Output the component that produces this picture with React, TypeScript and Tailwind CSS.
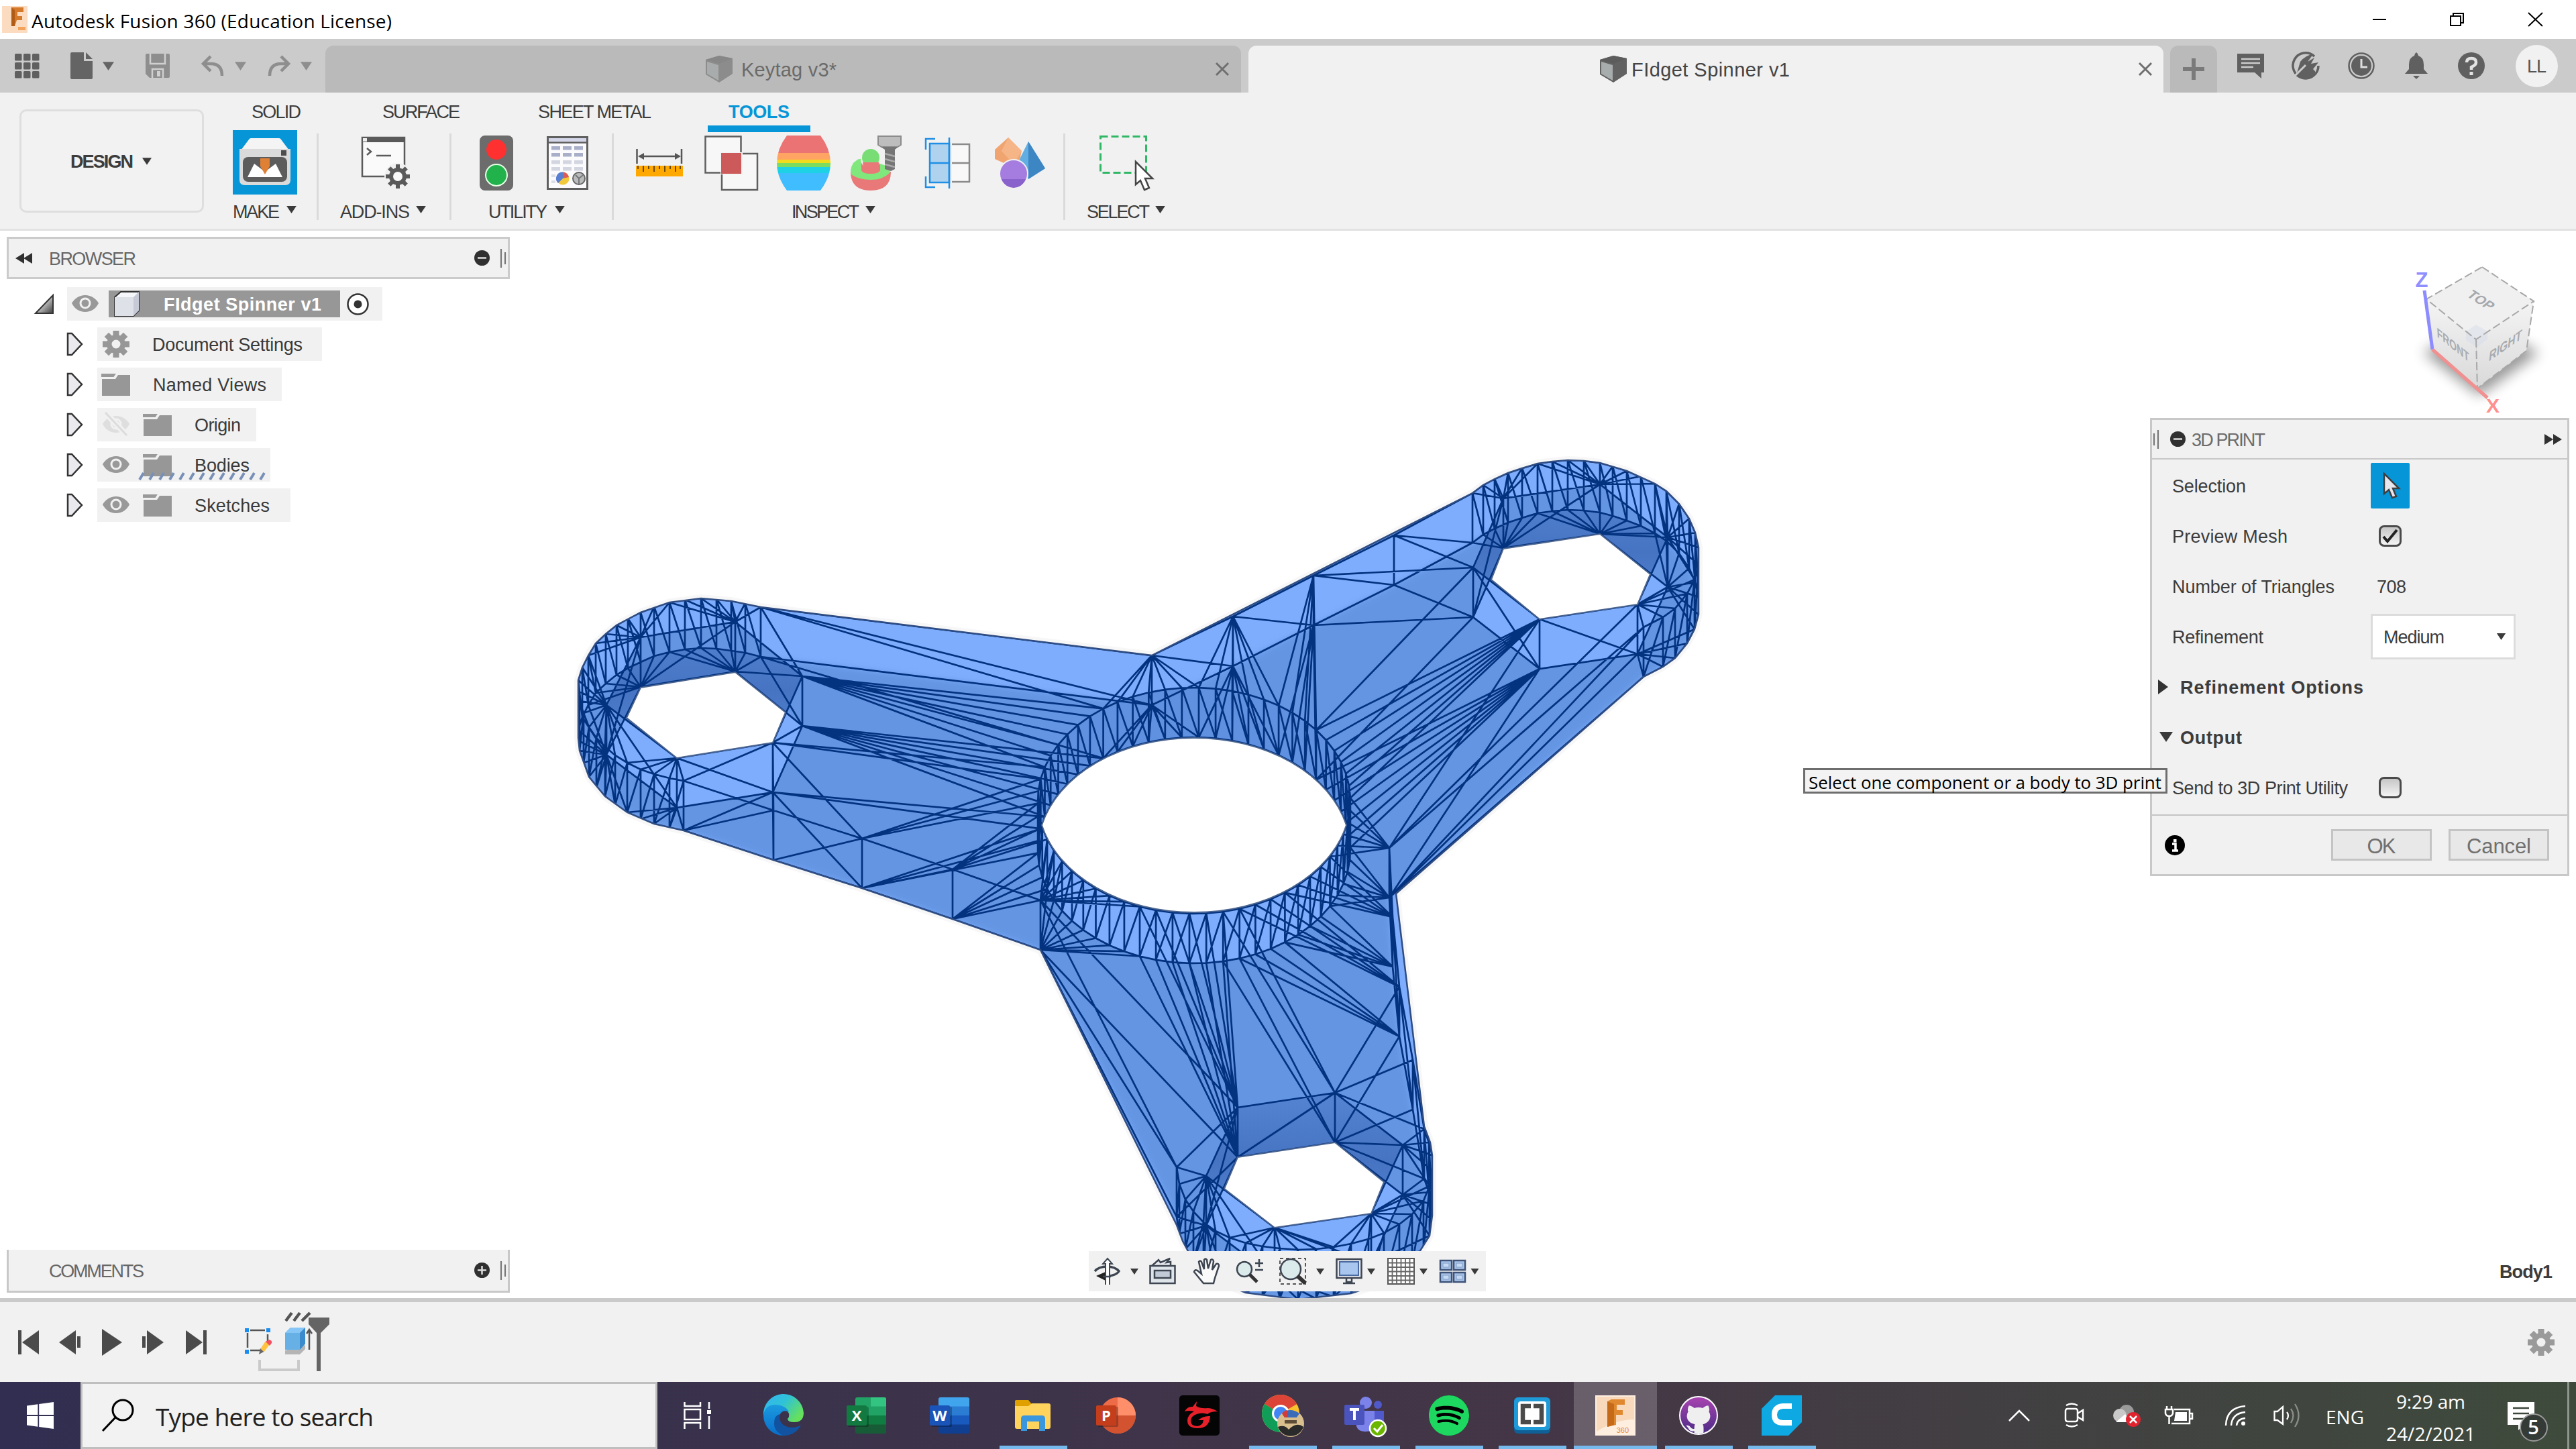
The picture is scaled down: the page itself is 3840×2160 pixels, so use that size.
import { useLayoutEffect, useRef, useState } from "react";
import type { ReactNode } from "react";
import { FaWindows, FaSpotify } from "react-icons/fa";

/* Text run stretched or tightened to an exact width through letter spacing. */
function Fit({ w, className = "", children }: { w: number; className?: string; children: string }) {
  const ref = useRef<HTMLSpanElement>(null);
  const [ls, setLs] = useState(0);
  useLayoutEffect(() => {
    const el = ref.current;
    if (!el) return;
    const n = el.getBoundingClientRect().width;
    setLs((w - n) / Math.max(1, children.length - 1));
  }, [w, children]);
  return (
    <span className={`block shrink-0 overflow-visible pt-[3px] whitespace-nowrap leading-none ${className}`} style={{ width: w }}>
      <span ref={ref} style={{ letterSpacing: ls }}>{children}</span>
    </span>
  );
}

function Svg({ w, h, className = "", children, vb }: { w: number; h: number; className?: string; children: ReactNode; vb?: string }) {
  return (
    <svg width={w} height={h} viewBox={vb ?? `0 0 ${w} ${h}`} className={`block shrink-0 overflow-visible ${className}`} fill="none">
      {children}
    </svg>
  );
}

function Down({ className = "", w = 16, h = 12, fill = "#3a3a3a" }: { className?: string; w?: number; h?: number; fill?: string }) {
  return (
    <Svg w={w} h={h} vb="0 0 16 12" className={className}>
      <path d="M0 0H16L8 12Z" fill={fill} />
    </Svg>
  );
}

/* ---------- icons ---------- */
function Gear({ s, fill, hole, className = "" }: { s: number; fill: string; hole: string; className?: string }) {
  return (
    <Svg w={s} h={s} vb="-20 -20 40 40" className={className}>
      {[0, 45, 90, 135].map((a) => (
        <rect key={a} x="-4.5" y="-20" width="9" height="40" fill={fill} transform={`rotate(${a})`} />
      ))}
      <circle r="14" fill={fill} />
      <circle r="6.5" fill={hole} />
    </Svg>
  );
}

function Cube({ a, b, c }: { a: string; b: string; c: string }) {
  return (
    <Svg w={40} h={40}>
      <path d="M0 6L20 0L40 4V27L20 40L0 28Z" fill={b} />
      <path d="M2 9L19 14V37L2 27Z" fill={a} />
      <path d="M0 6L20 0L40 4L20 12Z" fill={c} />
    </Svg>
  );
}

const Folder = ({ className = "" }: { className?: string }) => (
  <Svg w={42} h={34} className={className}>
    <path d="M0 2H19L17 5H0Z" fill="#999" stroke="#999" strokeWidth="2" />
    <path d="M0 9H20L24 3H42V34H0Z" fill="#979797" />
  </Svg>
);

const Eye = ({ off = false, className = "" }: { off?: boolean; className?: string }) => (
  <Svg w={40} h={32} className={className}>
    <path d="M0 15C4 8 11 3 20 3S36 8 40 15C36 23 29 28 20 28S4 23 0 15Z" fill={off ? "#dedede" : "#999"} />
    <circle cx="20" cy="15" r="7" stroke="#f1f1f1" strokeWidth="3" />
    {off && <path d="M4 -2L36 32" stroke="#f1f1f1" strokeWidth="9" />}
    {off && <path d="M4 -2L36 32" stroke="#dcdcdc" strokeWidth="3" />}
  </Svg>
);

function Cursor({ className = "", fill = "#fff" }: { className?: string; fill?: string }) {
  return (
    <Svg w={26} h={40} vb="0 0 26 40" className={className}>
      <path d="M2 2V32L9 26L14 38L20 36L15 24H24Z" fill={fill} stroke="#3f3f3f" strokeWidth="2.5" />
    </Svg>
  );
}

/* ---------- title bar ---------- */
function TitleBar() {
  return (
    <div className="flex h-[58px] items-center bg-white">
      <div className="ml-[3px] flex h-[40px] w-[38px] items-start justify-center bg-[#fbdcc0]">
        <Svg w={26} h={38}>
          <path d="M8 2H26V9H17V15H24V21H16L13 30H8Z" fill="#d5792b" />
          <path d="M8 2L13 6V30H8Z" fill="#b05c16" />
          <rect x="18" y="31" width="11" height="5" fill="#f3a45c" />
        </Svg>
      </div>
      <Fit w={537} className="ml-[6px] font-['Open_Sans',sans-serif] text-[28px] text-black">Autodesk Fusion 360 (Education License)</Fit>
      <div className="ml-auto flex items-center">
        <Svg w={20} h={20} className="mr-[95px]"><path d="M0 10H20" stroke="#000" strokeWidth="2" /></Svg>
        <Svg w={21} h={20} className="mr-[96px]">
          <path d="M1 5H16V19H1ZM5 5V1H20V15H16" stroke="#000" strokeWidth="2" />
        </Svg>
        <Svg w={21} h={20} className="mr-[50px]"><path d="M0 0L21 20M21 0L0 20" stroke="#000" strokeWidth="2" /></Svg>
      </div>
    </div>
  );
}

const CloseX = ({ className = "" }: { className?: string }) => (
  <Svg w={20} h={20} className={className}><path d="M1 1L19 19M19 1L1 19" stroke="#6f6f6f" strokeWidth="3" /></Svg>
);

function TabBar() {
  return (
    <div className="flex h-[80px] items-end bg-[#cbcbcb]">
      <div className="flex h-full w-[485px] items-center">
        <Svg w={36} h={36} className="ml-[22px]">
          {[0, 13, 26].map((y) => [0, 13, 26].map((x) => <rect key={`${x}-${y}`} x={x} y={y} width="10.5" height="10.5" rx="1.5" fill="#606060" />))}
        </Svg>
        <Svg w={33} h={40} className="ml-[47px]">
          <path d="M0 2Q0 0 2 0H20V13H33V38Q33 40 31 40H2Q0 40 0 38Z" fill="#646464" />
          <path d="M23 0L33 10H23Z" fill="#646464" />
        </Svg>
        <Down w={17} h={13} className="ml-[15px]" fill="#646464" />
        <Svg w={36} h={36} className="ml-[47px]">
          <path d="M0 2Q0 0 2 0H34Q36 0 36 2V34Q36 36 34 36H6L0 30Z" fill="#8e8e8e" />
          <path d="M7 0V15H29V0M10 36V23H26V36" stroke="#d0d0d0" strokeWidth="2.5" />
          <rect x="17" y="26" width="5" height="8" fill="#d0d0d0" />
        </Svg>
        <Svg w={33} h={30} className="ml-[47px]">
          <path d="M14 1L3 12L14 23M3 12H14Q31 12 31 30" stroke="#8e8e8e" strokeWidth="4.5" />
        </Svg>
        <Down w={17} h={13} className="ml-[17px]" fill="#8e8e8e" />
        <Svg w={33} h={30} className="ml-[33px]">
          <path d="M19 1L30 12L19 23M30 12H19Q2 12 2 30" stroke="#8e8e8e" strokeWidth="4.5" />
        </Svg>
        <Down w={17} h={13} className="ml-[15px]" fill="#8e8e8e" />
      </div>
      <div className="flex h-[70px] w-[1365px] items-center rounded-t-[12px] bg-[#bababa]">
        <div className="ml-[567px]"><Cube a="#a9acac" b="#8c8c8c" c="#878787" /></div>
        <Fit w={142} className="ml-[13px] font-['Liberation_Sans',sans-serif] text-[29px] text-[#6a6a6a]">Keytag v3*</Fit>
        <CloseX className="mr-[18px] ml-auto" />
      </div>
      <div className="ml-[11px] flex h-[70px] w-[1364px] items-center rounded-t-[12px] bg-[#f1f1f1]">
        <div className="ml-[524px]"><Cube a="#a7acac" b="#626262" c="#5c5c5c" /></div>
        <Fit w={236} className="ml-[7px] font-['Liberation_Sans',sans-serif] text-[29px] text-[#444]">FIdget Spinner v1</Fit>
        <CloseX className="mr-[17px] ml-auto" />
      </div>
      <div className="ml-[10px] flex h-[70px] w-[70px] items-center justify-center rounded-t-[12px] bg-[#bababa]">
        <Svg w={32} h={32}><path d="M16 0V32M0 16H32" stroke="#7a7a7a" strokeWidth="6" /></Svg>
      </div>
      <div className="flex h-full items-center">
        <Svg w={40} h={40} className="ml-[30px]">
          <path d="M0 2H40V30H36V39L26 30H0Z" fill="#606060" />
          <path d="M6 10H34M6 16H34M6 22H24" stroke="#ccc" strokeWidth="2.5" />
        </Svg>
        <Svg w={40} h={40} className="ml-[42px]">
          <path d="M33 6A19 19 0 1 0 39 20" stroke="#606060" strokeWidth="3.5" />
          <path d="M6 34L12 14Q20 4 31 3L23 14L33 8L28 17L39 15L31 25Q38 30 30 36Q20 42 6 34Z" fill="#606060" />
          <path d="M4 35L20 19" stroke="#ccc" strokeWidth="3" />
        </Svg>
        <Svg w={40} h={40} className="ml-[43px]">
          <circle cx="20" cy="20" r="18.5" stroke="#606060" strokeWidth="2.5" />
          <circle cx="20" cy="20" r="15" fill="#606060" />
          <path d="M20 10V22H29" stroke="#ddd" strokeWidth="3" />
        </Svg>
        <Svg w={36} h={40} className="ml-[44px]">
          <path d="M18 0Q21 2 21 5Q29 8 29 18V25L35 32H1L7 25V18Q7 8 15 5Q15 2 18 0Z" fill="#606060" />
          <path d="M13 35H23L18 40Z" fill="#606060" />
        </Svg>
        <Svg w={40} h={40} className="ml-[44px]">
          <circle cx="20" cy="20" r="20" fill="#606060" />
          <path d="M13 15Q13 9 20 9T27 15Q27 19 20 22V26" stroke="#e2e2e2" strokeWidth="4.5" />
          <rect x="17.5" y="29" width="5" height="5" fill="#e2e2e2" />
        </Svg>
        <div className="ml-[46px] flex h-[63px] w-[63px] items-center justify-center rounded-full bg-[#f1f1f1]">
          <Fit w={29} className="font-['Liberation_Sans',sans-serif] text-[27px] text-[#555]">LL</Fit>
        </div>
      </div>
    </div>
  );
}

/* ---------- ribbon ---------- */
const label = "font-['Liberation_Sans',sans-serif] text-[27px] text-[#3c3c3c]";
const Sep = () => <div className="mt-[2px] h-[129px] w-[3px] shrink-0 bg-[#dadada]" />;

function Group({ className, text, w, pad, gap, children }: { className: string; text: string; w: number; pad: string; gap: string; children: ReactNode }) {
  return (
    <div className={`flex shrink-0 flex-col ${className}`}>
      <div className="flex h-[92px] items-center">{children}</div>
      <div className={`flex h-[52px] items-center ${pad}`}>
        <Fit w={w} className={label}>{text}</Fit>
        <Down w={15} h={11} className={`-mt-[5px] ${gap}`} />
      </div>
    </div>
  );
}

function Ribbon() {
  return (
    <div className="flex h-[206px] border-b-[3px] border-[#e2e2e2] bg-[#f1f1f1]">
      <div className="mt-[25px] ml-[29px] flex h-[154px] w-[275px] shrink-0 items-center rounded-[10px] border-[3px] border-[#dedede] bg-[#f2f2f2]">
        <Fit w={94} className="ml-[73px] font-['Liberation_Sans',sans-serif] text-[27px] font-bold text-[#3c3c3c]">DESIGN</Fit>
        <Down w={14} h={11} className="ml-[13px]" />
      </div>
      <div className="flex flex-col">
        <div className="flex h-[63px] items-start">
          <Fit w={74} className={`mt-[13px] ml-[71px] ${label}`}>SOLID</Fit>
          <Fit w={116} className={`mt-[13px] ml-[121px] ${label}`}>SURFACE</Fit>
          <Fit w={169} className={`mt-[13px] ml-[116px] ${label}`}>SHEET METAL</Fit>
          <div className="ml-[84px] flex h-full w-[153px] flex-col items-center border-b-[10px] border-[#0696d7]">
            <Fit w={91} className="mt-[13px] font-['Liberation_Sans',sans-serif] text-[27px] font-bold text-[#0696d7]">TOOLS</Fit>
          </div>
        </div>
        <div className="flex">
          <Group className="w-[168px]" text="MAKE" w={70} pad="pl-[43px]" gap="ml-[10px]">
            <div className="-mt-[2px] ml-[43px] flex h-[96px] w-[96px] items-center justify-center bg-[#0696d7]">
              <Svg w={76} h={72}>
                <path d="M14 2Q15 0 17 0H59Q61 0 62 2L74 18H2Z" fill="#f4f4f4" />
                <path d="M0 16H76V62Q76 70 68 70H8Q0 70 0 62Z" fill="#dadada" />
                <rect x="62" y="18" width="8" height="8" fill="#4d4d4d" />
                <rect x="5" y="28" width="66" height="37" rx="8" fill="#5c5c5c" />
                <path d="M12 58L22 38L38 50L54 38L64 58Z" fill="#fff" />
                <path d="M31 30H45V42L38 54L31 42Z" fill="#e08035" />
              </Svg>
            </div>
          </Group>
          <Sep />
          <Group className="w-[195px]" text="ADD-INS" w={104} pad="pl-[32px]" gap="ml-[9px]">
            <Svg w={74} h={80} className="ml-[63px]">
              <path d="M2 2H65V60H2Z" fill="#fafafa" stroke="#5a5a5a" strokeWidth="2.5" />
              <path d="M2 2H65V9H2Z" fill="#5a5a5a" />
              <rect x="3" y="3" width="6" height="5" fill="#eee" />
              <path d="M9 18L15 23L9 28M23 29H45" stroke="#5a5a5a" strokeWidth="2.5" />
              <circle cx="55" cy="60" r="20" fill="#f1f1f1" />
              {[0, 45, 90, 135].map((a) => <rect key={a} x="52" y="42" width="6" height="36" fill="#5a5a5a" transform={`rotate(${a} 55 60)`} />)}
              <circle cx="55" cy="60" r="10" fill="#f8f8f8" stroke="#5a5a5a" strokeWidth="6" />
            </Svg>
          </Group>
          <Sep />
          <Group className="w-[239px]" text="UTILITY" w={88} pad="pl-[55px]" gap="ml-[11px]">
            <Svg w={50} h={82} className="ml-[42px]">
              <rect width="50" height="82" rx="8" fill="#6c6c6c" />
              <circle cx="25" cy="21" r="15" fill="#ff3030" />
              <circle cx="25" cy="59" r="16" fill="#22b24c" stroke="#e5ffe5" strokeWidth="2" />
            </Svg>
            <Svg w={62} h={80} className="ml-[50px]">
              <rect x="1.5" y="1.5" width="59" height="77" fill="#fbfbfd" stroke="#5f5f5f" strokeWidth="3" />
              <rect x="3" y="3" width="56" height="5" fill="#d3d6e8" />
              <path d="M0 9.5H62" stroke="#5f5f5f" strokeWidth="2.5" />
              {[15, 25, 36, 46].map((y, i) => [7, 24, 41].map((x) => <rect key={`${x}${y}`} x={x} y={y} width="13" height="5.5" fill={i < 2 ? "#a9afc8" : "#d3d6e0"} />))}
              <path d="M7 57H13V61H7ZM7 66H13V70H7Z" fill="#dcdee6" />
              <circle cx="24" cy="63" r="9.5" fill="#f2c83c" />
              <path d="M24 63V53.5A9.5 9.5 0 0 1 33 61Z" fill="#dd5a5a" />
              <path d="M24 53.5A9.5 9.5 0 0 0 17 70L24 63Z" fill="#5a7fd0" />
              <circle cx="48" cy="63" r="9" fill="#b9bbbd" stroke="#666" strokeWidth="2" />
              <path d="M43 58L48 63V71M48 63L54 58" stroke="#777" strokeWidth="2" />
            </Svg>
          </Group>
          <Sep />
          <Group className="w-[670px]" text="INSPECT" w={101} pad="pl-[265px]" gap="ml-[9px]">
            <Svg w={70} h={42} className="ml-[33px]">
              <path d="M1.5 0V22M68 0V22M8 11H62" stroke="#555" strokeWidth="2.5" />
              <path d="M3 11L12 6V16ZM67 11L58 6V16Z" fill="#555" />
              <rect y="25" width="70" height="16" fill="#ffa800" />
              <path d="M3 25V30M11 25V34M19 25V30M27 25V34M35 25V30M43 25V34M51 25V30M59 25V34M66 25V30" stroke="#6b4a00" strokeWidth="2" />
            </Svg>
            <Svg w={80} h={82} className="ml-[32px]">
              <rect x="1.5" y="1.5" width="53" height="54" fill="#f7f7f7" stroke="#5f5f5f" strokeWidth="2.5" />
              <rect x="26" y="27" width="53" height="54" fill="#f7f7f7" stroke="#5f5f5f" strokeWidth="2.5" />
              <rect x="24" y="25" width="33" height="33" fill="#f1f1f1" />
              <rect x="25" y="26" width="30" height="31" fill="#cc5a5a" />
            </Svg>
            <Svg w={80} h={82} className="ml-[28px]">
              <clipPath id="zebra"><path d="M15 0H65Q80 20 80 41T65 82H15Q0 62 0 41T15 0Z" /></clipPath>
              <g clipPath="url(#zebra)">
                <rect width="80" height="26" fill="#ec7373" />
                <rect y="26" width="80" height="10" fill="#ffa463" />
                <rect y="36" width="80" height="5" fill="#f0dc1c" />
                <rect y="41" width="80" height="6" fill="#7bdc5f" />
                <rect y="47" width="80" height="9" fill="#1cd2e4" />
                <rect y="56" width="80" height="26" fill="#40bdff" />
              </g>
            </Svg>
            <Svg w={76} h={82} className="ml-[30px]">
              <path d="M0 54Q0 82 30 82T60 54Z" fill="#e97878" />
              <path d="M0 52Q2 36 18 34L50 44Q60 48 58 56Q48 66 30 66T1 58Z" fill="#7fe77c" />
              <path d="M16 36V52Q18 57 30 57T44 52V36Z" fill="#e97878" />
              <circle cx="30" cy="35" r="15" fill="#f1f1f1" />
              <circle cx="30" cy="33" r="13" fill="#78dd75" />
              <path d="M18 40H42V52Q30 58 20 52Z" fill="#e97878" />
              <path d="M41 1H75V14L70 17H46L41 14Z" fill="#bdbdbd" stroke="#8c8c8c" strokeWidth="2" />
              <path d="M45 17H71L66 21V50L60 53L51 50V21Z" fill="#757575" />
              <path d="M51 27L66 31M51 35L66 39M51 43L66 47" stroke="#aaa" strokeWidth="2.5" />
            </Svg>
            <Svg w={68} h={76} className="ml-[34px]">
              <path d="M41 10H67V66H41M41 38H67" fill="#f8f8f8" stroke="#8a8a8a" strokeWidth="2.5" />
              <rect x="8" y="9" width="29" height="58" fill="#afd2ee" stroke="#1f8fe6" strokeWidth="2.5" />
              <path d="M8 38H37M37 0V76M16 2H2V18M2 58V74H16" stroke="#1f8fe6" strokeWidth="2.5" />
            </Svg>
            <Svg w={76} h={76} className="ml-[37px]">
              <path d="M50 6L75 46L50 62L36 34Z" fill="#62aee2" />
              <path d="M50 6L75 46L50 62Z" fill="#3c86c4" />
              <path d="M20 0L40 20L36 38L22 42L0 32V18Z" fill="#f0a570" />
              <path d="M20 0L40 20L28 40L10 20Z" fill="#f6b586" />
              <circle cx="28" cy="54" r="21" fill="#a57de0" stroke="#f1f1f1" strokeWidth="2" />
              <path d="M10 62A19 19 0 0 0 46 62Z" fill="#8a62cc" />
            </Svg>
          </Group>
          <Sep />
          <Group className="w-[182px]" text="SELECT" w={94} pad="pl-[32px]" gap="ml-[8px]">
            <Svg w={80} h={82} className="ml-[51px]">
              <rect x="1.5" y="1.5" width="68" height="54" stroke="#2fb765" strokeWidth="3" strokeDasharray="11 5" />
              <path d="M54 39V73L61 67L67 81L74 78L68 64H79Z" fill="#fff" stroke="#444" strokeWidth="2.5" />
            </Svg>
          </Group>
        </div>
      </div>
    </div>
  );
}

/* ---------- mesh ---------- */
type P = [number, number];
const DEPTH = 74;

const leftArc: P[] = [[1019, 1164], [998, 1160], [975, 1154], [955, 1147], [935, 1137], [917, 1126], [902, 1113], [889, 1100], [878, 1084], [870, 1063], [864, 1045], [862, 1030], [862, 1014], [868, 995], [877, 977], [888, 959], [903, 945], [919, 932], [936, 922], [955, 913], [975, 904], [998, 898], [1021, 894], [1045, 892], [1068, 893], [1090, 896], [1111, 899], [1134, 905]];
const rightArc: P[] = [[2195, 735], [2211, 723], [2228, 714], [2248, 705], [2269, 698], [2292, 691], [2314, 688], [2337, 686], [2361, 687], [2385, 690], [2404, 695], [2425, 702], [2446, 710], [2467, 721], [2484, 732], [2503, 751], [2518, 773], [2527, 794], [2532, 816], [2532, 842], [2526, 864], [2515, 885], [2497, 907], [2479, 920], [2450, 935]];
const lowArc: P[] = [[2123, 1683], [2130, 1703], [2135, 1722], [2135, 1745], [2131, 1768], [2122, 1790], [2105, 1810], [2086, 1825], [2063, 1838], [2040, 1847], [2014, 1854], [1988, 1859], [1962, 1862], [1935, 1863], [1908, 1861], [1882, 1858], [1857, 1853], [1833, 1845], [1812, 1835], [1794, 1822], [1779, 1806], [1767, 1788], [1758, 1765], [1754, 1740]];

const corner: P = [1717, 977];
const topEdge: P[] = [corner, [1838, 919], [1958, 858], [2078, 798]];
const rightCorner: P = [2071, 1264];
const sideEdge: P[] = [rightCorner, [2076, 1367], [2086, 1471], [2106, 1580]];
const leftCorner: P = [1551, 1342];
const underEdge: P[] = [leftCorner, [1420, 1296], [1285, 1250], [1153, 1208]];
const outline: P[] = [...topEdge, ...rightArc, ...sideEdge, ...lowArc, ...underEdge, ...leftArc];

const hexL: P[] = [[1096, 927], [955, 950], [904, 1051], [1009, 1130], [1152, 1107], [1196, 1008]];
const hexR: P[] = [[2385, 722], [2241, 743], [2196, 846], [2295, 923], [2441, 901], [2486, 801]];
const hexB: P[] = [[1990, 1629], [1845, 1651], [1798, 1753], [1900, 1830], [2044, 1809], [2091, 1707]];
const N = 58;
const ring: P[] = Array.from({ length: N }, (_, k) => {
  const a = -Math.PI / 2 + 0.03 + (k * 2 * Math.PI) / N;
  return [1780 + 233 * Math.cos(a), 1193.5 + 168.5 * Math.sin(a)];
});

const openings = [
  "M955 1025L1096 1002L1171 1062L1152 1107L1009 1130L934 1070Z",
  "M2241 818L2385 796L2460 856L2441 901L2295 923L2223 864Z",
  "M1845 1725L1990 1703L2063 1762L2044 1809L1900 1830L1825 1772Z",
  "M1553 1230A233 168 0 0 1 2007 1230A233 168 0 0 1 1553 1230Z",
];
const silhouette =
  "M1134 905L1717 977L2195 735L2211 723L2228 714L2248 705L2269 698L2292 691L2314 688L2337 686L2361 687L2385 690L2425 702L2467 721L2484 732L2503 751L2518 773L2527 794L2532 816V916L2526 938L2515 959L2497 981L2479 994L2450 1009L2081 1332L2123 1679L2132 1703L2135 1722V1812L2131 1842L2116 1866L2086 1899L2063 1912L2014 1928L1935 1937L1857 1927L1812 1909L1779 1880L1763 1850L1754 1826L1551 1416L1420 1370L1285 1324L1153 1282L1019 1238L975 1228L935 1211L902 1187L878 1158L864 1119L862 1100V1014L868 995L877 977L888 959L903 945L919 932L955 913L998 898L1045 892L1090 896Z";

const pts = (p: P[], dy = 0) => "M" + p.map(([x, y]) => `${x.toFixed(1)} ${(y + dy).toFixed(1)}`).join("L") + "Z";
const seg = (a: P, b: P, da = 0, db = 0) => `M${a[0].toFixed(1)} ${(a[1] + da).toFixed(1)}L${b[0].toFixed(1)} ${(b[1] + db).toFixed(1)}`;

const face: [P, P][] = [];
const fan = (c: P, from: number, to: number) => {
  for (let k = from; k <= to; k++) face.push([c, ring[k % N]]);
};
fan(corner, 52, 58);
fan(topEdge[1], 0, 5);
fan(topEdge[2], 5, 8);
fan(hexR[2], 8, 8);
fan(hexR[3], 8, 14);
fan(rightCorner, 14, 19);
fan(sideEdge[1], 19, 23);
fan(sideEdge[2], 23, 26);
fan(hexB[0], 26, 27);
fan(hexB[1], 27, 32);
fan(leftCorner, 32, 40);
fan(underEdge[1], 40, 43);
fan(underEdge[2], 43, 45);
fan(hexL[4], 45, 46);
fan(hexL[5], 46, 52);
fan(leftArc[leftArc.length - 1], 52, 52);
face.push(
  [leftArc[27], hexL[5]], [hexL[4], underEdge[3]], [hexL[4], leftArc[0]], [hexL[4], underEdge[2]],
  [hexR[2], topEdge[2]], [hexR[2], topEdge[3]], [rightCorner, hexR[3]], [rightCorner, hexR[4]], [rightCorner, rightArc[24]],
  [hexB[1], leftCorner], [hexB[1], lowArc[23]], [hexB[0], sideEdge[2]], [hexB[0], sideEdge[3]], [hexB[0], lowArc[0]],
);
const nearest = (arc: P[], hex: P[]) =>
  arc.forEach((a, i) => {
    const best = (q: P) => hex.reduce((m, h) => (Math.hypot(h[0] - q[0], h[1] - q[1]) < Math.hypot(m[0] - q[0], m[1] - q[1]) ? h : m));
    const m = best(a);
    face.push([m, a]);
    if (i > 0 && best(arc[i - 1]) !== m) face.push([m, arc[i - 1]]);
  });
nearest(leftArc, hexL);
nearest(rightArc, hexR);
nearest(lowArc, hexB);

const wall = (p: P[]) => p.map((a, i) => seg(a, a, 0, DEPTH) + seg(a, p[(i + 1) % p.length], 0, DEPTH)).join("");
const wire =
  [0, DEPTH].map((d) => face.map(([a, b]) => seg(a, b, d, d)).join("") + [outline, hexL, hexR, hexB, ring].map((p) => pts(p, d)).join("")).join("") +
  [outline, hexL, hexR, hexB, ring].map(wall).join("");

function Mesh() {
  return (
    <svg className="absolute inset-0" width="3840" height="1591" viewBox="0 344 3840 1591" fill="none">
      <defs>
        <clipPath id="sil"><path d={silhouette} /></clipPath>
        <clipPath id="low"><path d={pts(outline, DEPTH)} /></clipPath>
        <filter id="soft" x="-5%" y="-5%" width="110%" height="110%"><feGaussianBlur stdDeviation="5" /></filter>
        <linearGradient id="dark" x1="0" y1="0" x2="0" y2="1">
          <stop offset="0" stopColor="#5484d2" /><stop offset="0.5" stopColor="#4674c2" /><stop offset="1" stopColor="#5484d2" />
        </linearGradient>
      </defs>
      <path d={silhouette} stroke="#000" strokeOpacity="0.03" strokeWidth="12" />
      <path d={silhouette} fill="#7eadfd" />
      <g clipPath="url(#sil)"><path d={pts(outline, DEPTH)} fill="#6495e3" filter="url(#soft)" /></g>
      {[hexL, hexR, hexB].map((h, i) => (
        <g key={i}>
          <path d={pts(h, DEPTH)} fill="#7eadfd" />
          <path d={pts(h)} fill="#6495e3" />
          <path d={pts(h)} fill="url(#dark)" clipPath="url(#low)" />
        </g>
      ))}
      <path d={pts(ring, DEPTH)} fill="#7eadfd" />
      <path d={pts(ring)} fill="#5f91e0" />
      <g clipPath="url(#sil)"><path d={wire} stroke="#03327f" strokeWidth="2.7" /></g>
      {openings.map((d) => <path key={d} d={d} fill="#fff" stroke="#4a6490" strokeWidth="2" />)}
      <path d={silhouette} stroke="#2f4d83" strokeWidth="2.5" />
    </svg>
  );
}

function ViewCube() {
  return (
    <svg className="absolute top-[36px] left-[3560px]" width="280" height="240" viewBox="3560 380 280 240" fill="none">
      <defs>
        <filter id="shade" x="-30%" y="-30%" width="160%" height="160%"><feGaussianBlur stdDeviation="10" /></filter>
        <linearGradient id="cubeSide" x1="0" y1="0" x2="0" y2="1"><stop offset="0" stopColor="#f4f4f4" /><stop offset="1" stopColor="#d9d9d9" /></linearGradient>
      </defs>
      <path d="M3612 525L3700 480L3785 526L3696 590Z" fill="#000" opacity="0.4" filter="url(#shade)" />
      <path d="M3617 446L3691 506L3693 579L3626 521Z" fill="url(#cubeSide)" />
      <path d="M3691 506L3777 449L3766 523L3693 579Z" fill="url(#cubeSide)" />
      <path d="M3700 398L3777 449L3691 506L3617 446Z" fill="#f0f0f0" />
      <path d="M3676 494L3691 484L3708 494V506L3692 518L3676 507Z" fill="#d5dbe8" opacity="0.5" />
      <path d="M3700 398L3777 449L3691 506L3617 446ZM3691 506L3693 579L3766 523L3777 449" stroke="#a8a8a8" strokeWidth="2" strokeDasharray="12 5" />
      <path d="M3614 433L3626 521" stroke="#8c8cff" strokeWidth="5" />
      <path d="M3626 521L3708 593" stroke="#f09090" strokeWidth="5" />
      <g fontFamily="'Liberation Sans', sans-serif" fontWeight="bold" textAnchor="middle">
        <text transform="matrix(0.76 0.5 -0.72 0.6 3693 452)" fontSize="22" fill="#a6a8ac">TOP</text>
        <text transform="matrix(0.7 0.56 0.05 1 3657 521)" fontSize="20" fill="#a8abb0">FRONT</text>
        <text transform="matrix(0.75 -0.52 -0.12 1 3734 522)" fontSize="21" fill="#a8abb0">RIGHT</text>
        <text x="3610" y="428" fontSize="31" fill="#8f8fff">Z</text>
        <text x="3716" y="615" fontSize="30" fill="#ff9090">X</text>
      </g>
    </svg>
  );
}

/* ---------- browser ---------- */
const row = "font-['Liberation_Sans',sans-serif] text-[27px] text-[#3a3a3a]";
const Expand = () => (
  <Svg w={25} h={36} className="ml-[99px]"><path d="M2 2H8L23 18L8 34H2Z" fill="#e9e9ee" stroke="#333" strokeWidth="2.5" /></Svg>
);

function TreeRow({ width, text, w, icon }: { width: string; text: string; w: number; icon: "gear" | "folder" | "eye" | "off" }) {
  return (
    <div className="mb-[10px] flex h-[50px] items-center">
      <Expand />
      <div className={`ml-[21px] flex h-full items-center bg-[#f1f1f1] ${width}`}>
        {icon === "gear" && <Gear s={40} fill="#979797" hole="#f1f1f1" className="ml-[8px]" />}
        {icon === "folder" && <Folder className="ml-[7px]" />}
        {(icon === "eye" || icon === "off") && <Eye off={icon === "off"} className="ml-[8px]" />}
        {(icon === "eye" || icon === "off") && <Folder className="ml-[21px]" />}
        <Fit w={w} className={`ml-[34px] ${row}`}>{text}</Fit>
      </div>
    </div>
  );
}

const Grip = ({ flip = false }: { flip?: boolean }) => (
  <Svg w={8} h={28} className={flip ? "-scale-x-100" : ""}><path d="M1 0V28M7 5V23" stroke="#777" strokeWidth="2.2" /></Svg>
);
const Disc = ({ plus = false, className = "" }: { plus?: boolean; className?: string }) => (
  <Svg w={23} h={23} className={className}>
    <circle cx="11.5" cy="11.5" r="11.5" fill="#303030" />
    <path d={plus ? "M5 11.5H18M11.5 5V18" : "M5 11.5H18"} stroke="#ddd" strokeWidth="2.5" />
  </Svg>
);

function Browser() {
  return (
    <div className="absolute top-[9px] left-0">
      <div className="ml-[10px] flex h-[63px] w-[750px] items-center border-[3px] border-[#cbcbcb] bg-[#f1f1f1]">
        <Svg w={25} h={16} className="ml-[10px]"><path d="M13 0V16L0 8ZM25 0V16L12 8Z" fill="#303030" /></Svg>
        <Fit w={130} className="ml-[25px] font-['Liberation_Sans',sans-serif] text-[27px] text-[#666]">BROWSER</Fit>
        <Disc className="ml-auto" />
        <div className="mr-[3px] ml-[16px]"><Grip /></div>
      </div>
      <div className="mt-[12px] mb-[10px] flex h-[50px] items-center">
        <Svg w={30} h={30} className="ml-[51px]">
          <defs><linearGradient id="tri" x1="0" y1="0" x2="1" y2="1"><stop offset="0.3" stopColor="#eee" /><stop offset="0.9" stopColor="#555" /></linearGradient></defs>
          <path d="M2 29L28 2V29Z" fill="url(#tri)" stroke="#333" strokeWidth="2" />
        </Svg>
        <div className="ml-[19px] flex h-full w-[470px] items-center bg-[#f1f1f1]">
          <Eye className="ml-[7px]" />
          <div className="ml-[15px] flex h-[40px] w-[345px] items-center bg-[#979797]">
            <Svg w={40} h={38} className="ml-[7px]">
              <path d="M2 9L11 1H38V29L30 37H2Z" fill="#f6f7fa" stroke="#333" strokeWidth="2" />
              <path d="M2 9H30V37H2Z" fill="#dfe1e8" />
              <path d="M30 9L38 1V29L30 37Z" fill="#c6c9d6" />
            </Svg>
            <Fit w={235} className="ml-[35px] font-['Liberation_Sans',sans-serif] text-[27px] font-bold text-white">FIdget Spinner v1</Fit>
          </div>
          <Svg w={33} h={33} className="ml-[10px]">
            <circle cx="16.5" cy="16.5" r="15" fill="#fff" stroke="#333" strokeWidth="2.5" />
            <circle cx="16.5" cy="16.5" r="6" fill="#333" />
          </Svg>
        </div>
      </div>
      <TreeRow width="w-[335px]" text="Document Settings" w={224} icon="gear" />
      <TreeRow width="w-[275px]" text="Named Views" w={169} icon="folder" />
      <TreeRow width="w-[237px]" text="Origin" w={69} icon="off" />
      <div className="relative">
        <TreeRow width="w-[258px]" text="Bodies" w={82} icon="eye" />
        <Svg w={192} h={12} className="absolute top-[36px] left-[206px]">
          {Array.from({ length: 13 }, (_, i) => <path key={i} d={`M${2 + i * 15} 11L${8 + i * 15} 1`} stroke="#7890b8" strokeWidth="4" />)}
        </Svg>
      </div>
      <TreeRow width="w-[288px]" text="Sketches" w={112} icon="eye" />
    </div>
  );
}

/* ---------- print dialog ---------- */
const field = "font-['Liberation_Sans',sans-serif] text-[27px] text-[#3c3c3c]";

function Check({ on = false }: { on?: boolean }) {
  return (
    <div className="flex h-[32px] w-[34px] items-center justify-center rounded-[8px] border-[3px] border-[#4a4a4a] bg-linear-to-b from-[#c6c6c6] to-[#f4f4f4]">
      {on && <Svg w={24} h={22}><path d="M2 12L8 19L22 2" stroke="#222" strokeWidth="4" /></Svg>}
    </div>
  );
}

function Row({ text, w, children }: { text: string; w: number; children?: ReactNode }) {
  return (
    <div className="flex h-[75px] items-center pl-[30px]">
      <div className="w-[296px] shrink-0"><Fit w={w} className={field}>{text}</Fit></div>
      {children}
    </div>
  );
}

function PrintDialog() {
  return (
    <div className="absolute top-[279px] left-[3205px] flex h-[683px] w-[625px] flex-col border-[3px] border-[#c8c8c8] bg-[#f1f1f1]">
      <div className="flex h-[59px] shrink-0 items-center border-b-[2px] border-[#c8c8c8]">
        <div className="ml-[2px]"><Grip flip /></div>
        <Disc className="ml-[17px]" />
        <Fit w={110} className="ml-[9px] font-['Liberation_Sans',sans-serif] text-[27px] text-[#6c6c6c]">3D PRINT</Fit>
        <Svg w={26} h={16} className="mr-[8px] ml-auto"><path d="M0 0L13 8L0 16ZM13 0L26 8L13 16Z" fill="#303030" /></Svg>
      </div>
      <div className="mt-[1px] flex flex-col">
        <Row text="Selection" w={110}>
          <div className="flex h-[68px] w-[58px] items-center justify-center rounded-[2px] bg-[#0696d7]"><Cursor fill="#e6e6ee" className="ml-[4px]" /></div>
        </Row>
        <Row text="Preview Mesh" w={172}><div className="ml-[12px]"><Check on /></div></Row>
        <Row text="Number of Triangles" w={242}><Fit w={44} className={`ml-[9px] ${field}`}>708</Fit></Row>
        <Row text="Refinement" w={136}>
          <div className="flex h-[68px] w-[216px] items-center border-[3px] border-[#dcdcdc] bg-white">
            <Fit w={91} className={`ml-[16px] ${field}`}>Medium</Fit>
            <Down w={15} h={10} className="mr-[11px] ml-auto" />
          </div>
        </Row>
        <div className="flex h-[75px] items-center">
          <Svg w={15} h={22} className="ml-[9px]"><path d="M0 0L15 11L0 22Z" fill="#333" /></Svg>
          <Fit w={273} className={`ml-[18px] font-bold ${field}`}>Refinement Options</Fit>
        </div>
        <div className="flex h-[75px] items-center">
          <Down w={22} h={15} className="ml-[10px]" />
          <Fit w={92} className={`ml-[10px] font-bold ${field}`}>Output</Fit>
        </div>
        <Row text="Send to 3D Print Utility" w={262}><div className="ml-[12px]"><Check /></div></Row>
      </div>
      <div className="mt-[3px] flex grow items-center border-t-[2px] border-[#c4c4c4]">
        <Svg w={30} h={30} className="ml-[19px]">
          <circle cx="15" cy="15" r="15" fill="#000" />
          <path d="M11 13H16V23M11 23H20" stroke="#fff" strokeWidth="3.5" />
          <rect x="13" y="6" width="4.5" height="4.5" fill="#fff" />
        </Svg>
        <div className="ml-[218px] flex h-[47px] w-[150px] items-center justify-center border-[3px] border-[#c4c4c4] bg-[#e8e8e8]">
          <Fit w={43} className="font-['Liberation_Sans',sans-serif] text-[31px] text-[#707070]">OK</Fit>
        </div>
        <div className="ml-[25px] flex h-[47px] w-[150px] items-center justify-center border-[3px] border-[#c4c4c4] bg-[#e8e8e8]">
          <Fit w={96} className="font-['Liberation_Sans',sans-serif] text-[31px] text-[#707070]">Cancel</Fit>
        </div>
      </div>
    </div>
  );
}

/* ---------- navigation bar ---------- */
function NavBar() {
  const s = { stroke: "#3e4652", strokeWidth: 2.5 };
  return (
    <div className="absolute top-[1521px] left-[1623px] flex h-[60px] w-[592px] items-center bg-[#f1f1f1]">
      <Svg w={40} h={40} className="ml-[7px]">
        <path d="M2 20Q8 13 20 13T38 20Q34 27 14 28" {...s} strokeWidth={3.5} />
        <path d="M18 21L4 27L18 34Z" fill="#222" />
        <path d="M18 40V9H14L21 1L28 9H24V40" fill="#fff" {...s} strokeWidth={2} />
        <path d="M14 28H26" {...s} />
      </Svg>
      <Down w={14} h={9} className="ml-[14px]" />
      <Svg w={40} h={40} className="ml-[15px]">
        <path d="M4 12L14 3L17 7L31 1L26 7L32 6V12" fill="#e8e8ee" {...s} />
        <rect x="1.5" y="12" width="37" height="26" fill="#dfe3ea" {...s} />
        <rect x="8" y="19" width="24" height="11" fill="#c2cad8" {...s} />
      </Svg>
      <Svg w={40} h={40} className="ml-[26px]">
        <path d="M15 38L1 21Q2 17 6 19L12 24L8 6Q10 3 12 6L16 17L16 3Q18 0 20 3L22 16L26 3Q29 1 30 5L28 18L34 9Q38 8 38 12L32 30L30 38Z" fill="#fafafa" {...s} />
      </Svg>
      <Svg w={40} h={40} className="ml-[24px]">
        <circle cx="12" cy="17" r="11" fill="#dbeaea" {...s} />
        <path d="M20 25L31 36" stroke="#333" strokeWidth="5" />
        <path d="M28 8H40M34 2V14M28 18H40" {...s} />
      </Svg>
      <Svg w={41} h={40} className="ml-[24px]">
        <rect x="1" y="1" width="38" height="38" stroke="#555" strokeWidth="2" strokeDasharray="5 4" />
        <circle cx="17" cy="17" r="15" fill="#dbeaea" {...s} />
        <path d="M27 27L39 38" stroke="#333" strokeWidth="6" />
      </Svg>
      <Down w={14} h={9} className="ml-[13px]" />
      <Svg w={40} h={40} className="ml-[16px]">
        <rect x="1.5" y="2" width="37" height="28" fill="#e3e6ee" {...s} />
        <rect x="6" y="6" width="28" height="20" fill="#a9c7ee" stroke="#4a6aa0" strokeWidth="2" />
        <path d="M16 30V36H24V30M11 38H29" {...s} />
      </Svg>
      <Down w={14} h={9} className="ml-[6px]" />
      <Svg w={41} h={40} className="ml-[17px]">
        <rect x="1" y="1" width="39" height="38" fill="#fff" stroke="#555" strokeWidth="2" />
        <path d="M7.5 1V39M14 1V39M20.5 1V39M27 1V39M33.5 1V39M1 7.5H40M1 14H40M1 20.5H40M1 27H40M1 33.5H40" stroke="#666" strokeWidth="1.8" />
      </Svg>
      <Down w={14} h={9} className="ml-[6px]" />
      <Svg w={38} h={34} className="ml-[17px]">
        {[0, 18].map((y) => [0, 20].map((x) => (
          <g key={`${x}${y}`}>
            <rect x={x + 1} y={y + 1} width="17" height="14" fill="#a9c4e8" stroke="#3f5378" strokeWidth="2.5" />
            <rect x={x + 5} y={y + 5} width="9" height="6" fill="#c6daf4" stroke="#7f9cc6" />
          </g>
        )))}
      </Svg>
      <Down w={13} h={9} className="ml-[8px]" />
    </div>
  );
}

function Canvas() {
  return (
    <div className="relative h-[1591px] overflow-hidden bg-white">
      <Mesh />
      <ViewCube />
      <Browser />
      <PrintDialog />
      <div className="absolute top-[801px] left-[2688px] flex h-[38px] w-[543px] items-center border-[3px] border-[#6e6e6e] bg-[#f3f3f3] pl-[5px]">
        <Fit w={526} className="font-['Open_Sans',sans-serif] text-[26px] text-black">Select one component or a body to 3D print</Fit>
      </div>
      <NavBar />
      <div className="absolute top-[1519px] left-[10px] flex h-[64px] w-[750px] items-center border-x-[3px] border-b-[3px] border-[#c8c8c8] bg-[#f1f1f1]">
        <Fit w={142} className="ml-[60px] font-['Liberation_Sans',sans-serif] text-[27px] text-[#666]">COMMENTS</Fit>
        <Disc plus className="ml-auto" />
        <div className="mr-[3px] ml-[16px]"><Grip /></div>
      </div>
      <Fit w={79} className="absolute top-[1536px] left-[3726px] font-['Liberation_Sans',sans-serif] text-[27px] font-bold text-[#3c3c3c]">Body1</Fit>
    </div>
  );
}

/* ---------- timeline ---------- */
function Timeline() {
  const f = "#4b4b4b";
  return (
    <div className="flex h-[125px] items-center border-t-[6px] border-[#cacaca] bg-[#f1f1f1]">
      <Svg w={31} h={36} className="ml-[27px]"><path d="M0 0H5V36H0ZM31 0V36L6 18Z" fill={f} /></Svg>
      <Svg w={32} h={36} className="ml-[30px]"><path d="M25 0V36L0 18ZM27 9H32V26H27Z" fill={f} /></Svg>
      <Svg w={30} h={40} className="ml-[32px]"><path d="M0 0L30 20L0 40Z" fill={f} /></Svg>
      <Svg w={32} h={36} className="ml-[30px]"><path d="M7 0V36L32 18ZM0 9H5V26H0Z" fill={f} /></Svg>
      <Svg w={31} h={36} className="ml-[33px]"><path d="M0 0V36L25 18ZM26 0H31V36H26Z" fill={f} /></Svg>
      <Svg w={130} h={90} className="ml-[55px]" vb="363 1955 130 90">
        <path d="M373 1982H395M369 1986V2008M373 2012H389M399 1988V2000" stroke="#555" strokeWidth="2.5" />
        <path d="M365 1979H371V1985H365ZM397 1979H403V1985H397ZM365 2011H371V2017H365Z" fill="#1b8cf0" />
        <path d="M388 2010L396 1998L402 2003L393 2015Z" fill="#ffc33f" />
        <path d="M396 1999L401 1996Q406 1997 405 2001L402 2005Z" fill="#f05060" />
        <path d="M386 2018L388 2009L393 2014Z" fill="#666" />
        <path d="M425 2018H447L455 2010V2004L425 2012Z" fill="#b5b5b5" />
        <path d="M425 1986L433 1978H455V2002L447 2011H425Z" fill="#66b0e6" />
        <path d="M425 1986L433 1978H455L447 1986Z" fill="#86c6f6" />
        <path d="M447 1986L455 1978V2002L447 2011Z" fill="#3b8bcc" />
        <path d="M461 2011V1982M457 1987L461 1981L465 1987" stroke="#555" strokeWidth="2.5" />
        <path d="M426 1968L435 1956M438 1968L447 1956M450 1968L462 1956" stroke="#555" strokeWidth="4.5" />
        <path d="M460 1963H491V1973L478 1986V2043H472V1986L460 1973Z" fill="#646464" />
        <path d="M387 2026V2041H445V2026" stroke="#cacaca" strokeWidth="4" />
      </Svg>
      <Gear s={40} fill="#9a9a9a" hole="#f1f1f1" className="mr-[32px] ml-auto" />
    </div>
  );
}

/* ---------- taskbar ---------- */
function Slot({ open = false, active = false, children }: { open?: boolean; active?: boolean; children: ReactNode }) {
  return (
    <div className={`flex h-full w-[124px] shrink-0 flex-col items-center ${active ? "bg-white/20" : ""}`}>
      <div className="flex h-[95px] items-center pt-[5px]">{children}</div>
      {open && <div className={`h-[5px] bg-[#76b9ed] ${active ? "w-full" : "w-[101px]"}`} />}
    </div>
  );
}

function Office({ letter, tile, shades, round = false }: { letter: string; tile: string; shades: string[]; round?: boolean }) {
  const id = `off${letter}`;
  return (
    <Svg w={60} h={54}>
      <clipPath id={id}>{round ? <circle cx="32" cy="27" r="27" /> : <rect x="13" width="46" height="54" rx="3" />}</clipPath>
      <g clipPath={`url(#${id})`}>
        {round ? (
          <>
            <rect width="60" height="54" fill={shades[0]} />
            <rect x="32" width="28" height="27" fill={shades[1]} />
            <rect y="27" width="60" height="27" fill={shades[2]} />
          </>
        ) : (
          shades.map((s, i) => <rect key={i} x={i >= 4 ? 36 : 13} y={(i % 4) * 13.5} width="46" height="14" fill={s} />)
        )}
      </g>
      <rect x="2" y="14" width="31" height="30" rx="2" fill="#000" opacity="0.25" />
      <rect y="12" width="30" height="30" rx="2" fill={tile} />
      <text x="15" y="35" textAnchor="middle" fontFamily="'Open Sans', sans-serif" fontWeight="bold" fontSize="22" fill="#fff">{letter}</text>
    </Svg>
  );
}

function Taskbar() {
  return (
    <div className="flex h-[100px] items-center bg-linear-to-r from-[#312e51] via-[#443646] via-60% to-[#3e4b3c]">
      <div className="flex h-full w-[120px] items-center justify-center"><FaWindows className="h-[46px] w-[40px] text-white" /></div>
      <div className="flex h-full w-[860px] items-center border-[3px] border-[#bfbfbf] bg-[#f2f2f2]">
        <Svg w={48} h={48} className="ml-[29px]">
          <circle cx="31" cy="16" r="15" stroke="#000" strokeWidth="3" />
          <path d="M20 27L1 47" stroke="#000" strokeWidth="3" />
        </Svg>
        <Fit w={325} className="ml-[32px] font-['Open_Sans',sans-serif] text-[37px] text-[#222]">Type here to search</Fit>
      </div>
      <Svg w={42} h={40} className="mr-[45px] ml-[39px]">
        <path d="M1.5 0V6H25V0M1.5 40V31H25V40M1.5 11H25V26H1.500ZM38 0V10M38 21V40" stroke="#fff" strokeWidth="2.5" />
        <rect x="35" y="12" width="6" height="6" fill="#fff" />
      </Svg>
      <Slot>
        <Svg w={60} h={60}>
          <defs>
            <linearGradient id="e1" x1="0" y1="0" x2="1" y2="0.600"><stop offset="0" stopColor="#35b4f2" /><stop offset="0.500" stopColor="#2fc2d8" /><stop offset="1" stopColor="#66e05c" /></linearGradient>
            <linearGradient id="e2" x1="0" y1="0" x2="0" y2="1"><stop offset="0" stopColor="#1a9be0" /><stop offset="1" stopColor="#0b6cc8" /></linearGradient>
          </defs>
          <path d="M0 30A30 30 0 0 1 60 26Q60 40 46 40Q36 40 36 35Q39 32 38 27Q34 18 22 18Q6 18 0 30Z" fill="url(#e1)" />
          <path d="M0 30Q2 14 18 14Q34 15 38 25Q28 20 24 30Q20 50 40 54Q36 60 30 60A30 30 0 0 1 0 30Z" fill="url(#e2)" />
          <path d="M24 28Q22 46 42 48Q50 48 56 44Q48 60 30 60Q16 54 16 42Q16 30 24 28Z" fill="#1153a0" />
        </Svg>
      </Slot>
      <Slot><Office letter="X" tile="#127a41" shades={["#21a366", "#21a366", "#107c41", "#185c37", "#33c481", "#21a366", "#107c41", "#185c37"]} /></Slot>
      <Slot><Office letter="W" tile="#1a54b8" shades={["#41a5ee", "#2b7cd3", "#185abd", "#103f91"]} /></Slot>
      <Slot open>
        <Svg w={54} h={46}>
          <path d="M0 2Q0 0 2 0H20L25 6L22 12H0Z" fill="#e0a100" />
          <path d="M0 9H20L25 5H50Q53 5 53 8V40Q53 43 50 43H3Q0 43 0 40Z" fill="#ffd35c" />
          <path d="M9 46V28Q9 23 14 23H40Q45 23 45 28V46H36V32H18V46Z" fill="#3a97dd" />
        </Svg>
      </Slot>
      <Slot><Office letter="P" round tile="#c43e1c" shades={["#ed6c47", "#ff8f6b", "#d35230"]} /></Slot>
      <Slot>
        <Svg w={60} h={60}>
          <rect width="60" height="60" rx="5" fill="#050505" />
          <path d="M8 24Q12 16 20 17L26 9L25 16Q32 20 42 19Q49 19 57 24Q46 24 42 28Q34 25 26 28Q17 31 17 39Q18 46 27 46Q35 45 36 37L28 37Q36 30 46 31Q45 49 27 49Q12 49 12 38Q12 29 22 24Q14 22 8 24Z" fill="#e8202a" />
        </Svg>
      </Slot>
      <Slot open>
        <Svg w={64} h={62} className="-mr-[2px]">
          <circle cx="28" cy="28" r="28" fill="#fbc02d" />
          <path d="M28 28L3.800 14A28 28 0 0 1 52.200 14Z" fill="#db4437" />
          <path d="M28 28L3.800 14A28 28 0 0 0 28 56Z" fill="#0f9d58" />
          <circle cx="28" cy="28" r="13" fill="#fff" />
          <circle cx="28" cy="28" r="10" fill="#4285f4" />
          <circle cx="43" cy="43" r="20" fill="#d9bf8e" />
          <path d="M30 28Q42 18 56 28L52 34H34Z" fill="#3c6bb8" />
          <path d="M30 28Q33 24 38 23L38 34H34Z" fill="#d33a3a" />
          <path d="M24 48Q34 44 40 52Q52 40 62 48A20 20 0 0 1 24 48Z" fill="#2a2a2a" />
          <path d="M34 38H52V43H34Z" fill="#5c4c38" />
        </Svg>
      </Slot>
      <Slot open>
        <Svg w={64} h={60} className="-mb-[4px]">
          <circle cx="32" cy="9" r="9" fill="#7b83eb" />
          <circle cx="50" cy="12" r="6" fill="#5059c9" />
          <path d="M40 21H59V40Q58 48 50 48H40Z" fill="#5059c9" />
          <path d="M18 21H45V42Q44 52 32 52T18 44Z" fill="#7b83eb" />
          <rect y="12" width="30" height="30" rx="2" fill="#4b53bc" />
          <path d="M8 19H22M15 19V35" stroke="#fff" strokeWidth="4" />
          <circle cx="50" cy="47" r="12" fill="#6bb700" stroke="#fff" strokeWidth="2.5" />
          <path d="M44 47L49 52L57 42" stroke="#fff" strokeWidth="3" />
        </Svg>
      </Slot>
      <Slot open>
        <div className="flex h-[60px] w-[60px] items-center justify-center rounded-full bg-black">
          <FaSpotify className="h-[62px] w-[62px] shrink-0 text-[#1ed760]" />
        </div>
      </Slot>
      <Slot open>
        <Svg w={54} h={54}>
          <rect width="54" height="54" rx="6" fill="#0f6096" />
          <rect width="54" height="49" rx="6" fill="#1f9ad8" />
          <rect x="6" y="6" width="42" height="38" rx="4" fill="#fff" />
          <path d="M25 13H13V37H25M29 13H41V37H29" stroke="#4a4a4a" strokeWidth="6.5" />
        </Svg>
      </Slot>
      <Slot open active>
        <Svg w={60} h={60}>
          <rect width="60" height="60" fill="#fdeee0" />
          <path d="M2 2H58V36Q30 36 2 54Z" fill="#f9d9bb" />
          <path d="M18 9L24 6H44V14H32V22H41V29H31V44L18 47Z" fill="#e0882f" />
          <path d="M18 9L28 13V44L18 47Z" fill="#c46a18" />
          <text x="50" y="56" textAnchor="end" fontFamily="'Liberation Sans', sans-serif" fontSize="11" fill="#e8862f">360</text>
        </Svg>
      </Slot>
      <Slot open>
        <div className="flex h-[58px] w-[58px] items-center justify-center overflow-hidden rounded-full border-[2px] border-white bg-linear-to-b from-[#a843b0] to-[#4c2a86]">
          <Svg w={38} h={48} className="mt-[14px]" vb="0 0 42 48">
            <path d="M5 0Q9 0 14 4Q21 2 28 4Q33 0 37 0Q40 6 38 10Q42 16 39 23Q36 29 28 31Q30 33 29 48H14V42Q7 44 4 37Q2 34 0 33Q5 31 8 36Q10 39 14 38Q14 33 15 31Q6 29 3 23Q0 16 4 10Q2 6 5 0Z" fill="#efefef" />
          </Svg>
        </div>
      </Slot>
      <Slot open>
        <Svg w={60} h={60}>
          <path d="M20 0H60V40L40 60H0V20Z" fill="#0ea9e3" />
          <path d="M45 16H32Q19 17 19 29T32 41H45" stroke="#fff" strokeWidth="8" />
        </Svg>
      </Slot>
      <div className="ml-auto flex h-full items-center text-white">
        <Svg w={32} h={18}><path d="M1 17L16 2L31 17" stroke="#fff" strokeWidth="2.5" /></Svg>
        <Svg w={30} h={36} className="ml-[51px]">
          <rect x="2" y="8" width="18" height="19" rx="3" stroke="#fff" strokeWidth="2.5" />
          <path d="M20 15L28 10V25L20 20M3 3Q11 -2 20 3M3 32Q11 37 20 32" stroke="#fff" strokeWidth="2.5" />
        </Svg>
        <Svg w={42} h={36} className="ml-[43px]">
          <circle cx="20" cy="13" r="11" fill="#9a9a9a" />
          <circle cx="10" cy="18" r="10" fill="#c9c9c9" />
          <path d="M4 28L18 16L26 28Z" fill="#fff" />
          <circle cx="30" cy="24" r="11" fill="#e0232e" />
          <path d="M25 19L35 29M35 19L25 29" stroke="#fff" strokeWidth="2.5" />
        </Svg>
        <Svg w={42} h={28} className="ml-[35px]">
          <path d="M14 5H37V26H10M37 11H41V19H37" stroke="#fff" strokeWidth="2.5" />
          <path d="M16 9H33V22H14Z" fill="#fff" />
          <path d="M3 0V5M10 0V5M1 5H12V11Q11 15 6.500 15T1 11ZM6.500 15V27" stroke="#fff" strokeWidth="2.5" />
        </Svg>
        <Svg w={30} h={30} className="ml-[48px]">
          <path d="M1 30Q2 3 30 1M9 30Q10 12 30 10M17 30Q18 20 30 19" stroke="#fff" strokeWidth="2.5" />
          <circle cx="27" cy="27" r="3" fill="#fff" />
        </Svg>
        <Svg w={42} h={36} className="ml-[42px]">
          <path d="M1.500 12H6L14 5V31L6 25H1.500Z" stroke="#fff" strokeWidth="2.300" />
          <path d="M20 13Q24 18 20 24" stroke="#fff" strokeWidth="2.300" />
          <path d="M26 8Q33 18 26 29M32 1Q43 18 32 35" stroke="#8b8d88" strokeWidth="2.300" />
        </Svg>
        <Fit w={57} className="ml-[36px] font-['Open_Sans',sans-serif] text-[28px]">ENG</Fit>
        <div className="mt-[2px] ml-[33px] flex w-[133px] flex-col items-center gap-[17px]">
          <Fit w={103} className="font-['Open_Sans',sans-serif] text-[28px]">9:29 am</Fit>
          <Fit w={133} className="font-['Open_Sans',sans-serif] text-[28px]">24/2/2021</Fit>
        </div>
        <Svg w={60} h={60} className="mt-[20px] ml-[48px]">
          <path d="M0 0H40V34H24L16 42V34H0Z" fill="#fff" />
          <path d="M8 9H32M8 17H32M8 25H24" stroke="#3c463a" strokeWidth="2.5" />
          <circle cx="39" cy="38" r="20" fill="#343a36" stroke="#999" strokeWidth="2" />
          <text x="38.500" y="48" textAnchor="middle" fontFamily="'Open Sans', sans-serif" fontWeight="600" fontSize="29" fill="#fff">5</text>
        </Svg>
        <div className="mr-[10px] ml-[29px] h-full w-[3px] bg-[#8f968e]" />
      </div>
    </div>
  );
}

export default function App() {
  return (
    <div className="flex h-[2160px] w-[3840px] flex-col overflow-hidden bg-white">
      <TitleBar />
      <TabBar />
      <Ribbon />
      <Canvas />
      <Timeline />
      <Taskbar />
    </div>
  );
}
